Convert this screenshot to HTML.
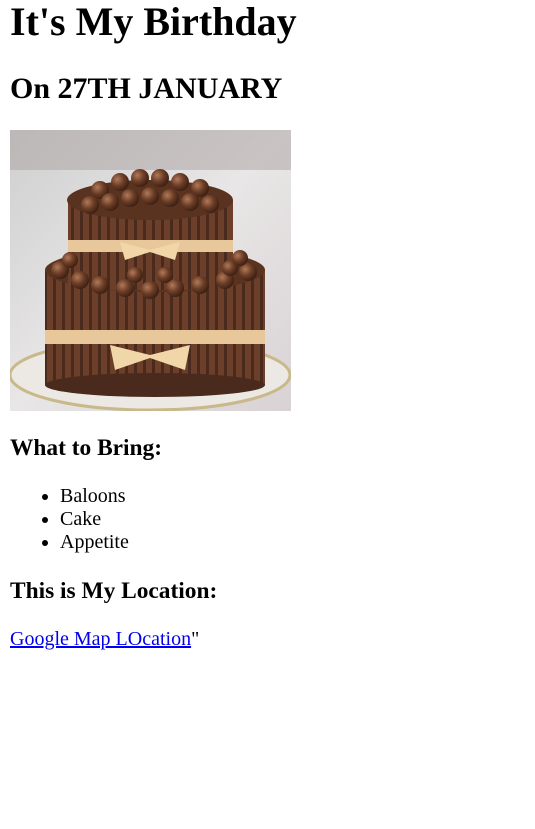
<!DOCTYPE html>
<html><head><meta charset="utf-8"><style>
html,body{margin:0;padding:0;background:#fff}
body{margin:0 10px;font-family:"Liberation Serif","Times New Roman",serif;font-size:20px;color:#000}
h1{font-size:40px;margin:-2px 0 26.8px}
h2{font-size:30px;margin:24.9px 0 23.9px}
h3{font-size:23.4px;margin:23.4px 0}
h3.first{margin-top:24.4px}
ul{margin:20px 0;padding-left:50px}
p{margin:20px 0}
a{color:#0000ee}
svg{display:block}
</style></head><body>
<h1>It's My Birthday</h1>
<h2>On 27TH JANUARY</h2>
<svg width="281" height="281" viewBox="0 0 281 281">
<defs>
<linearGradient id="bg" x1="0" y1="0" x2="1" y2="1"><stop offset="0" stop-color="#cfcfcf"/><stop offset="0.5" stop-color="#e8e6e6"/><stop offset="1" stop-color="#d9d2d4"/></linearGradient>
<pattern id="kk" width="9" height="10" patternUnits="userSpaceOnUse"><rect width="9" height="10" fill="#4a2a1c"/><rect x="1" width="6" height="10" fill="#6b3f2a"/></pattern>
<radialGradient id="ball" cx="0.35" cy="0.35" r="0.7"><stop offset="0" stop-color="#b07a5a"/><stop offset="0.5" stop-color="#6e3f27"/><stop offset="1" stop-color="#3a1e12"/></radialGradient>
</defs>
<rect width="281" height="281" fill="url(#bg)"/>
<rect x="0" y="0" width="281" height="40" fill="#a9a29f" opacity="0.5"/>
<ellipse cx="140" cy="245" rx="140" ry="35" fill="#ece8e4" stroke="#c8b88a" stroke-width="3"/>
<rect x="35" y="140" width="220" height="115" fill="url(#kk)"/>
<ellipse cx="145" cy="255" rx="110" ry="12" fill="#4a2a1c"/>
<ellipse cx="145" cy="140" rx="110" ry="22" fill="#5a3220"/>
<rect x="35" y="200" width="220" height="14" fill="#e8c89a"/>
<rect x="58" y="70" width="165" height="90" fill="url(#kk)"/>
<ellipse cx="140" cy="70" rx="83" ry="20" fill="#5a3220"/>
<rect x="58" y="110" width="165" height="12" fill="#e8c89a"/>
<path d="M110 112 L140 120 L170 112 L165 130 L140 122 L115 130Z" fill="#f0d6a8"/>
<path d="M100 215 L140 225 L180 215 L175 240 L140 228 L105 240Z" fill="#f0d6a8"/>
<g fill="url(#ball)">
<circle cx="90" cy="60" r="9"/><circle cx="110" cy="52" r="9"/><circle cx="130" cy="48" r="9"/><circle cx="150" cy="48" r="9"/><circle cx="170" cy="52" r="9"/><circle cx="190" cy="58" r="9"/>
<circle cx="80" cy="75" r="9"/><circle cx="100" cy="72" r="9"/><circle cx="120" cy="68" r="9"/><circle cx="140" cy="66" r="9"/><circle cx="160" cy="68" r="9"/><circle cx="180" cy="72" r="9"/><circle cx="200" cy="74" r="9"/>
<circle cx="50" cy="140" r="9"/><circle cx="70" cy="150" r="9"/><circle cx="90" cy="155" r="9"/><circle cx="115" cy="158" r="9"/><circle cx="140" cy="160" r="9"/><circle cx="165" cy="158" r="9"/><circle cx="190" cy="155" r="9"/><circle cx="215" cy="150" r="9"/><circle cx="238" cy="142" r="9"/>
<circle cx="60" cy="130" r="8"/><circle cx="230" cy="128" r="8"/><circle cx="220" cy="138" r="8"/><circle cx="125" cy="145" r="8"/><circle cx="155" cy="145" r="8"/>
</g>
</svg>
<h3 class="first">What to Bring:</h3>
<ul><li>Baloons</li><li>Cake</li><li>Appetite</li></ul>
<h3>This is My Location:</h3>
<p><a href="#">Google Map LOcation</a>"</p>
</body></html>
